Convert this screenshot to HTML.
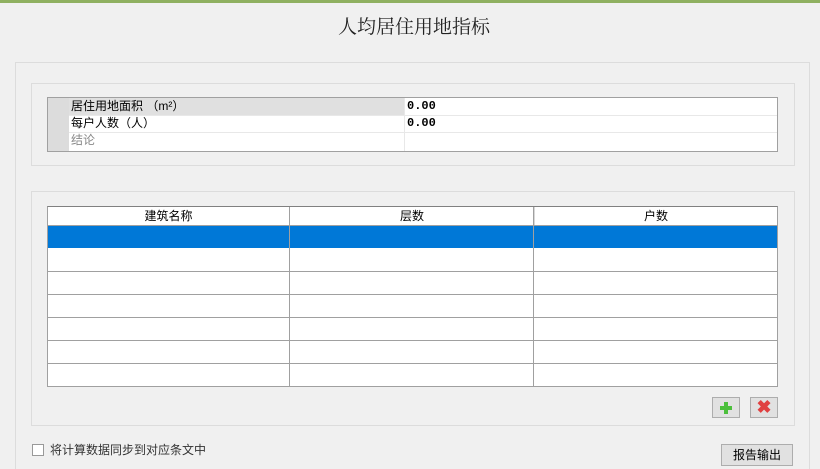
<!DOCTYPE html><html><head><meta charset="utf-8"><style>
html,body{margin:0;width:820px;height:469px;overflow:hidden}
body{background:#f0f0f0;font-family:"Liberation Sans","Noto Sans CJK SC",sans-serif;position:relative;font-size:12px;color:#000}
.a{position:absolute;box-sizing:border-box}
</style></head><body>
<div class="a" style="left:0;top:0;width:820px;height:3px;background:#8fb060"></div>
<div class="a" style="left:4px;top:14px;width:820px;text-align:center;font-family:'Liberation Serif','Noto Serif CJK SC',serif;font-size:19px;line-height:28px;color:#222">人均居住用地指标</div>
<div class="a" style="left:15px;top:62px;width:795px;height:407px;border:1px solid #dcdcdc;border-bottom:none"></div>
<div class="a" style="left:31px;top:83px;width:764px;height:83px;border:1px solid #dcdcdc"></div>
<div class="a" style="left:47px;top:97px;width:731px;height:55px;border:1px solid #a0a0a0;background:#fff"></div>
<div class="a" style="left:48px;top:98px;width:21px;height:53px;background:#dcdcdc"></div>
<div class="a" style="left:69px;top:98px;width:335px;height:17px;background:#e0e0e0"></div>
<div class="a" style="left:69px;top:115px;width:708px;height:1px;background:#e8e8e8"></div>
<div class="a" style="left:69px;top:132px;width:708px;height:1px;background:#e8e8e8"></div>
<div class="a" style="left:404px;top:98px;width:1px;height:53px;background:#e8e8e8"></div>
<div class="a" style="left:71px;top:98px;line-height:17px">居住用地面积 （m²）</div>
<div class="a" style="left:71px;top:115px;line-height:17px">每户人数（人）</div>
<div class="a" style="left:71px;top:132px;line-height:17px;color:#888">结论</div>
<div class="a" style="left:407px;top:98px;line-height:17px;font-family:'Liberation Mono',monospace;font-weight:bold">0.00</div>
<div class="a" style="left:407px;top:115px;line-height:17px;font-family:'Liberation Mono',monospace;font-weight:bold">0.00</div>
<div class="a" style="left:31px;top:191px;width:764px;height:235px;border:1px solid #dcdcdc"></div>
<div class="a" style="left:47px;top:206px;width:731px;height:181px;border:1px solid #a0a0a0;border-top-color:#808080;background:#fff"></div>
<div class="a" style="left:48px;top:207px;width:729px;height:19px;line-height:18px;display:flex;border-bottom:1px solid #a0a0a0">
<div style="width:241px;text-align:center;border-right:1px solid #d8d8d8">建筑名称</div><div style="width:244px;text-align:center;border-right:1px solid #d8d8d8">层数</div><div style="flex:1;text-align:center">户数</div></div>
<div class="a" style="left:48px;top:226px;width:729px;height:22px;background:#0078d7"></div>
<div class="a" style="left:48px;top:248px;width:729px;height:24px;border-bottom:1px solid #a0a0a0"></div>
<div class="a" style="left:48px;top:271px;width:729px;height:24px;border-bottom:1px solid #a0a0a0"></div>
<div class="a" style="left:48px;top:294px;width:729px;height:24px;border-bottom:1px solid #a0a0a0"></div>
<div class="a" style="left:48px;top:317px;width:729px;height:24px;border-bottom:1px solid #a0a0a0"></div>
<div class="a" style="left:48px;top:340px;width:729px;height:24px;border-bottom:1px solid #a0a0a0"></div>
<div class="a" style="left:289px;top:207px;width:1px;height:179px;background:#a0a0a0"></div>
<div class="a" style="left:533px;top:207px;width:1px;height:179px;background:#a0a0a0"></div>
<div class="a" style="left:712px;top:397px;width:28px;height:21px;border:1px solid #adadad;background:#e1e1e1"></div>
<div class="a" style="left:720px;top:406px;width:12px;height:4px;background:#4cbf3c"></div>
<div class="a" style="left:724px;top:402px;width:4px;height:12px;background:#4cbf3c"></div>
<div class="a" style="left:750px;top:397px;width:28px;height:21px;border:1px solid #adadad;background:#e1e1e1;color:#e04040;font-size:18px;font-weight:bold;text-align:center;line-height:19px">✖</div>
<div class="a" style="left:32px;top:444px;width:12px;height:12px;border:1px solid #999;background:#fff"></div>
<div class="a" style="left:50px;top:442px;line-height:16px;color:#333">将计算数据同步到对应条文中</div>
<div class="a" style="left:721px;top:444px;width:72px;height:22px;border:1px solid #adadad;background:#e1e1e1;text-align:center;line-height:20px">报告输出</div>
</body></html>
